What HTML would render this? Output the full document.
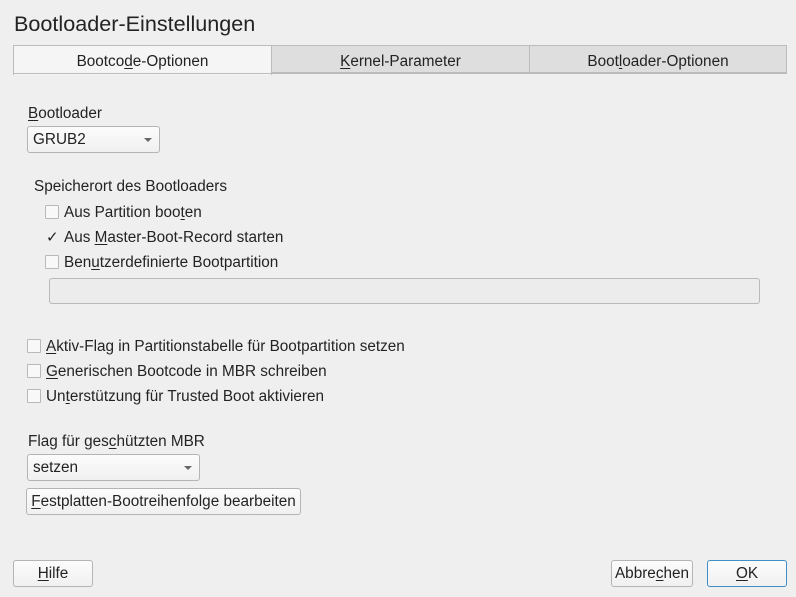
<!DOCTYPE html>
<html><head><meta charset="utf-8"><style>
body{margin:0;width:796px;height:597px;background:#efefef;font-family:"Liberation Sans","DejaVu Sans",sans-serif;color:#232323;font-size:15.3px;position:relative;overflow:hidden}
.a{position:absolute;white-space:nowrap}
u{text-decoration:underline;text-underline-offset:2px}
.tab{position:absolute;top:45px;height:28px;border:1px solid #bcbcbc;background:#dedede;text-align:center;line-height:31px;box-sizing:border-box}
.cb{position:absolute;width:12px;height:12px;border:1px solid #b9b9b9;background:#f8f8f8;border-radius:1px}
.btn{position:absolute;border:1px solid #b4b4b4;border-radius:3px;background:linear-gradient(#fcfcfc,#f0f0f0);text-align:center;box-sizing:border-box;line-height:26px}
.arr{position:absolute;width:0;height:0;border-left:4px solid transparent;border-right:4px solid transparent;border-top:4px solid #666}
</style></head><body>
<div class="a" style="left:14px;top:11px;font-size:21.6px">Bootloader-Einstellungen</div>
<div class="tab" style="left:13px;width:259px;background:#f5f5f5;border-bottom:none;height:30px">Bootco<u>d</u>e-Optionen</div>
<div class="tab" style="left:271px;width:259px"><u>K</u>ernel-Parameter</div>
<div class="tab" style="left:529px;width:258px">Boot<u>l</u>oader-Optionen</div>
<div class="a" style="left:13px;top:73px;width:774px;height:1px;background:#bcbcbc"></div>
<div class="a" style="left:28px;top:105px"><u>B</u>ootloader</div>
<div class="btn" style="left:27px;top:126px;width:133px;height:27px;text-align:left;padding-left:5px">GRUB2</div>
<div class="arr" style="left:144px;top:138px"></div>
<div class="a" style="left:34px;top:178px">Speicherort des Bootloaders</div>
<div class="cb" style="left:45px;top:205px"></div><div class="a" style="left:64px;top:204px">Aus Partition boo<u>t</u>en</div>
<div class="cb" style="left:45px;top:231px;border-color:transparent;background:none;font-size:15px;line-height:12px">✓</div><div class="a" style="left:64px;top:229px">Aus <u>M</u>aster-Boot-Record starten</div>
<div class="cb" style="left:45px;top:255px"></div><div class="a" style="left:64px;top:254px">Ben<u>u</u>tzerdefinierte Bootpartition</div>
<div class="a" style="left:49px;top:278px;width:709px;height:24px;border:1px solid #b9b9b9;border-radius:3px;background:#ececec"></div>
<div class="cb" style="left:27px;top:339px"></div><div class="a" style="left:46px;top:338px"><u>A</u>ktiv-Flag in Partitionstabelle für Bootpartition setzen</div>
<div class="cb" style="left:27px;top:364px"></div><div class="a" style="left:46px;top:363px"><u>G</u>enerischen Bootcode in MBR schreiben</div>
<div class="cb" style="left:27px;top:389px"></div><div class="a" style="left:46px;top:388px">Un<u>t</u>erstützung für Trusted Boot aktivieren</div>
<div class="a" style="left:28px;top:433px">Flag für ges<u>c</u>hützten MBR</div>
<div class="btn" style="left:27px;top:454px;width:173px;height:27px;text-align:left;padding-left:5px">setzen</div>
<div class="arr" style="left:184px;top:466px"></div>
<div class="btn" style="left:26px;top:488px;width:275px;height:27px"><u>F</u>estplatten-Bootreihenfolge bearbeiten</div>
<div class="btn" style="left:13px;top:560px;width:80px;height:27px"><u>H</u>ilfe</div>
<div class="btn" style="left:611px;top:560px;width:82px;height:27px">Abbre<u>c</u>hen</div>
<div class="btn" style="left:707px;top:560px;width:80px;height:27px;border-color:#3d8ec9"><u>O</u>K</div>
</body></html>
